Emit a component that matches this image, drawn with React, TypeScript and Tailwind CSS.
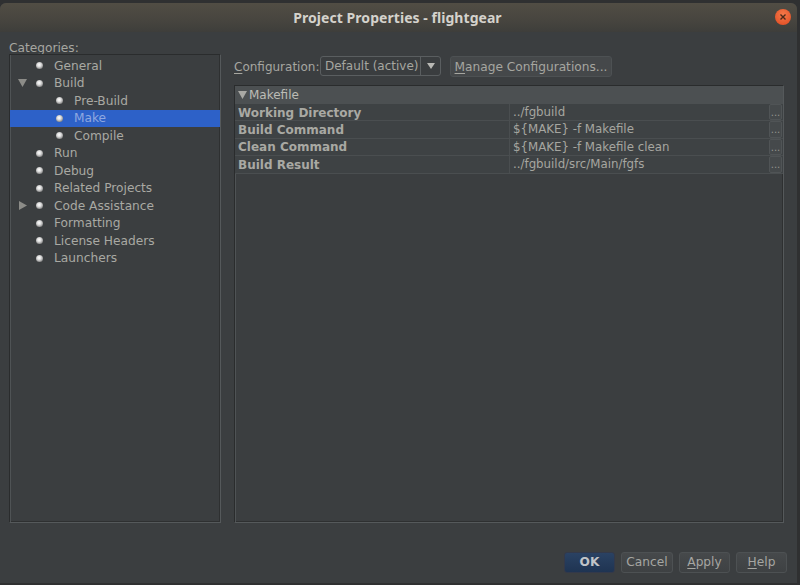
function Bullet() {
  return <span className="block w-[7px] h-[7px] shrink-0 rounded-full bg-[radial-gradient(circle_at_45%_40%,#ffffff_0%,#dcdcdc_35%,#8f8f8f_70%,#55585a_100%)]" />;
}

function TreeRow({ label, depth = 0, arrow, selected }: { label: string; depth?: number; arrow?: "down" | "right"; selected?: boolean }) {
  return (
    <div className={`flex items-center h-[17.5px] ${selected ? "bg-[#2d61c8] text-[#8fa8e0]" : "text-[#a9a9a3]"}`}>
      <span className="w-[6px] shrink-0" />
      <span className="w-[13px] shrink-0 flex items-center justify-center">
        {arrow === "down" && (
          <svg width="9" height="8" viewBox="0 0 9 8"><path d="M0 0H9L4.5 8Z" fill="#8c8c88" /></svg>
        )}
        {arrow === "right" && (
          <svg width="8" height="9" viewBox="0 0 8 9"><path d="M0 0V9L8 4.5Z" fill="#8c8c88" /></svg>
        )}
      </span>
      <span className={depth ? "w-[27px] shrink-0" : "w-[7px] shrink-0"} />
      <Bullet />
      <span className="w-[11px] shrink-0" />
      <span className="whitespace-nowrap">{label}</span>
    </div>
  );
}

function Mnemonic({ pre, ch, post }: { pre?: string; ch: string; post: string }) {
  return (
    <span className="whitespace-nowrap">
      {pre}
      <span className="underline underline-offset-2 decoration-1">{ch}</span>
      {post}
    </span>
  );
}

function PropRow({ name, value }: { name: string; value: string }) {
  return (
    <div className="flex h-[17.4px] border-b border-[#4a4e50] bg-[#3e4244] shrink-0">
      <div className="w-[275px] shrink-0 pl-[3px] pt-[1px] flex items-center border-r border-[#4a4e50] font-bold text-[12px] text-[#a9a9a3] whitespace-nowrap">
        {name}
      </div>
      <div className="flex-1 pl-[3px] pt-[1px] flex items-center text-[11.8px] text-[#a6a6a0] whitespace-nowrap">{value}</div>
      <div className="w-[13px] shrink-0 mr-[1px] rounded-[2px] border border-[#505456] bg-[#45494b] text-[#94948e] text-[10px] leading-[15px] text-center overflow-hidden">...</div>
    </div>
  );
}

function DialogButton({ children, primary, w }: { children: React.ReactNode; primary?: boolean; w: string }) {
  return (
    <div className={`${w} h-[21px] rounded-[3px] border flex items-center justify-center ${primary ? "border-[#33394a] bg-[linear-gradient(#2a4263,#1f3452)] text-[#c0c4c8] font-bold" : "border-[#4d5153] bg-[linear-gradient(#46494b,#3e4143)] text-[#a6a6a2]"}`}>
      {children}
    </div>
  );
}

export default function App() {
  return (
    <div className="w-[800px] h-[585px] bg-[#2f3031] pt-[3px] pb-[2px] pr-[3px] overflow-hidden text-[12.2px] leading-none font-['DejaVu_Sans',sans-serif]">
      <div className="h-full flex flex-col bg-[#3b3e40] rounded-t-[6px] overflow-hidden">
        <header className="h-[29px] shrink-0 flex items-center bg-[linear-gradient(#514d44,#47453f_60%,#3e3e3b)] relative">
          <div className="flex-1 text-center pr-[2px] font-bold text-[14px] tracking-[0.05px] text-[#d4d2cc] font-['Noto_Sans',sans-serif]">
            Project Properties - flightgear
          </div>
          <div className="absolute right-[6px] top-[6px] w-[16px] h-[16px] rounded-full bg-[radial-gradient(circle_at_50%_35%,#f47a4a,#e0481f)] flex items-center justify-center">
            <svg width="8" height="8" viewBox="0 0 8 8"><path d="M1.5 1.5L6.5 6.5M6.5 1.5L1.5 6.5" stroke="#4a2a1a" strokeWidth="1.4" /></svg>
          </div>
        </header>

        <div className="flex-1 flex flex-col min-h-0 pl-[9px] pr-[10px]">
          <div className="flex flex-1 min-h-0 gap-[13px]">
            <section className="w-[212px] shrink-0 flex flex-col">
              <div className="h-[22px] shrink-0 flex items-end text-[#a6a6a0]">
                <Mnemonic pre="Ca" ch="t" post="egories:" />
              </div>
              <div className="h-[469px] border border-t-[#2a2c2d] border-l-[#2a2c2d] border-r-[#55595b] border-b-[#55595b] shadow-[inset_1px_0_0_#4f5355,inset_-1px_-1px_0_#2e3031] pt-[2px]">
                <TreeRow label="General" />
                <TreeRow label="Build" arrow="down" />
                <TreeRow label="Pre-Build" depth={1} />
                <TreeRow label="Make" depth={1} selected />
                <TreeRow label="Compile" depth={1} />
                <TreeRow label="Run" />
                <TreeRow label="Debug" />
                <TreeRow label="Related Projects" />
                <TreeRow label="Code Assistance" arrow="right" />
                <TreeRow label="Formatting" />
                <TreeRow label="License Headers" />
                <TreeRow label="Launchers" />
              </div>
            </section>

            <section className="flex-1 min-w-0 flex flex-col mr-[3px]">
              <div className="h-[53px] shrink-0 pt-[24px] flex items-start text-[#a6a6a0]">
                <div className="h-[21px] pt-[1px] flex items-center w-[86px] text-[12px]">
                  <Mnemonic ch="C" post="onfiguration:" />
                </div>
                <div className="w-[121px] h-[20px] rounded-[3px] border border-[#5a5e60] flex items-center bg-[#3a3d3f]">
                  <span className="flex-1 pl-[4px] whitespace-nowrap text-[12px]">Default (active)</span>
                  <span className="w-[20px] h-full border-l border-[#5a5e60] flex items-center justify-center">
                    <svg width="8" height="6" viewBox="0 0 8 6"><path d="M0 0H8L4 6Z" fill="#b8b8b4" /></svg>
                  </span>
                </div>
                <div className="ml-[9px] w-[162px] h-[21px] pt-[1px] rounded-[3px] border border-[#4d5153] bg-[#45484a] flex items-center justify-center">
                  <Mnemonic ch="M" post="anage Configurations..." />
                </div>
              </div>
              <div className="h-[438px] border border-t-[#2a2c2d] border-l-[#2a2c2d] border-r-[#55595b] border-b-[#55595b] shadow-[inset_1px_0_0_#4f5355,inset_-1px_-1px_0_#2e3031] flex flex-col">
                <div className="h-[18px] shrink-0 bg-[#4c5052] flex items-center text-[12px] text-[#bcbcb6]">
                  <span className="w-[14px] shrink-0 flex justify-center pl-[1px]">
                    <svg width="9" height="8" viewBox="0 0 9 8"><path d="M0 0H9L4.5 8Z" fill="#a8a8a4" /></svg>
                  </span>
                  Makefile
                </div>
                <PropRow name="Working Directory" value="../fgbuild" />
                <PropRow name="Build Command" value="${MAKE} -f Makefile" />
                <PropRow name="Clean Command" value="${MAKE} -f Makefile clean" />
                <PropRow name="Build Result" value="../fgbuild/src/Main/fgfs" />
              </div>
            </section>
          </div>

          <footer className="h-[60px] shrink-0 flex justify-end gap-[6px] pt-[29px]">
            <DialogButton primary w="w-[51px]">OK</DialogButton>
            <DialogButton w="w-[52px]">Cancel</DialogButton>
            <DialogButton w="w-[51px]"><Mnemonic ch="A" post="pply" /></DialogButton>
            <DialogButton w="w-[51px]"><Mnemonic ch="H" post="elp" /></DialogButton>
          </footer>
        </div>
      </div>
    </div>
  );
}
